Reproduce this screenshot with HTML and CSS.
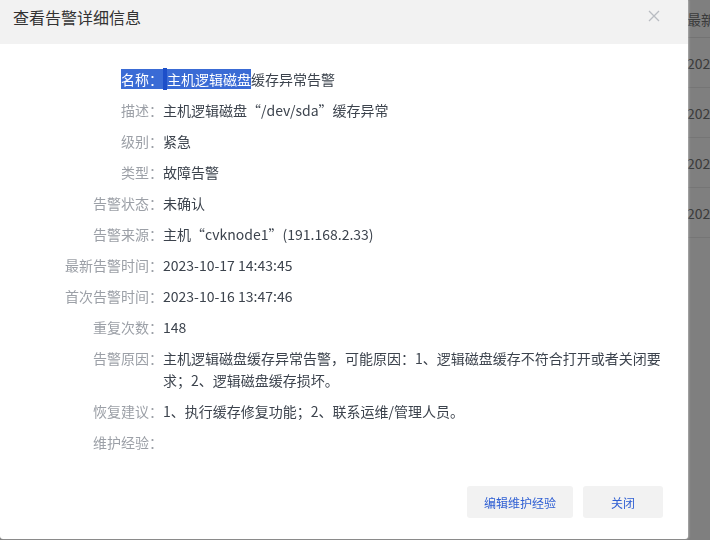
FILE: index.html
```html
<!DOCTYPE html>
<html>

<head>
    <title>告警详细信息</title>
    <link rel="stylesheet" href="styles.css">
</head>

<body>
    <!-- alarm list behind the dialog -->
    <div class="list">
        <div class="list-head"><span class="cell">最新告警时间</span></div>
        <div class="list-row"><span class="cell">2023-10-17 14:43:45</span></div>
        <div class="list-row"><span class="cell">2023-10-17 14:40:12</span></div>
        <div class="list-row"><span class="cell">2023-10-17 14:38:06</span></div>
        <div class="list-row"><span class="cell">2023-10-17 14:30:51</span></div>
    </div>

    <div class="mask"></div>

    <div class="dialog">
        <div class="dialog-head">
            <span class="dialog-title">查看告警详细信息</span>
            <span class="dialog-close">
                <svg width="12" height="12" viewBox="0 0 12 12">
                    <path d="M1 1 L11 11 M11 1 L1 11" stroke="#b9bcc2" stroke-width="1.3" fill="none" />
                </svg>
            </span>
        </div>

        <div class="dialog-body">
            <div class="row">
                <span class="label"><span class="sel">名称：</span></span>
                <span class="value"><span class="sel sel-edge"></span><span class="sel">主机逻辑磁盘</span>缓存异常告警</span>
            </div>
            <div class="row">
                <span class="label">描述：</span>
                <span class="value">主机逻辑磁盘“/dev/sda”缓存异常</span>
            </div>
            <div class="row">
                <span class="label">级别：</span>
                <span class="value">紧急</span>
            </div>
            <div class="row">
                <span class="label">类型：</span>
                <span class="value">故障告警</span>
            </div>
            <div class="row">
                <span class="label">告警状态：</span>
                <span class="value">未确认</span>
            </div>
            <div class="row">
                <span class="label">告警来源：</span>
                <span class="value">主机“cvknode1”(191.168.2.33)</span>
            </div>
            <div class="row">
                <span class="label">最新告警时间：</span>
                <span class="value">2023-10-17 14:43:45</span>
            </div>
            <div class="row">
                <span class="label">首次告警时间：</span>
                <span class="value">2023-10-16 13:47:46</span>
            </div>
            <div class="row">
                <span class="label">重复次数：</span>
                <span class="value">148</span>
            </div>
            <div class="row">
                <span class="label">告警原因：</span>
                <span class="value">主机逻辑磁盘缓存异常告警，可能原因：1、逻辑磁盘缓存不符合打开或者关闭要求；2、逻辑磁盘缓存损坏。</span>
            </div>
            <div class="row">
                <span class="label">恢复建议：</span>
                <span class="value">1、执行缓存修复功能；2、联系运维/管理人员。</span>
            </div>
            <div class="row">
                <span class="label">维护经验：</span>
                <span class="value"></span>
            </div>
        </div>

        <div class="dialog-foot">
            <button class="btn">编辑维护经验</button>
            <button class="btn btn-close">关闭</button>
        </div>
    </div>
</body>

</html>
```

FILE: styles.css
```css
body {
    background: white;
    color: #333;
    font-family: "Noto Sans CJK SC", "Noto Sans", sans-serif;
    font-size: 14px;
    height: 540px;
    margin: 0;
    overflow: hidden;
    padding: 0;
}

.list {
    width: 100%;
}

.list-head {
    align-items: center;
    border-bottom: solid 1px #e6e6e6;
    display: flex;
    height: 37px;
}

.list-row {
    align-items: center;
    border-bottom: solid 1px #eaeaea;
    display: flex;
    height: 49px;
}

.cell {
    color: #767676;
    padding-left: 687px;
    white-space: nowrap;
}

.mask {
    background: rgba(0, 0, 0, .5);
    bottom: 0;
    left: 0;
    position: fixed;
    right: 0;
    top: 0;
}

.dialog {
    background: white;
    border-radius: 0 0 3px 3px;
    box-shadow: 1px 0 2px rgba(255, 255, 255, .35);
    display: flex;
    flex-direction: column;
    height: 539px;
    left: 0;
    position: absolute;
    top: 0;
    width: 688px;
}

.dialog-head {
    background: #f2f2f2;
    display: flex;
    height: 44px;
    justify-content: space-between;
    padding: 0 28px 0 13px;
}

.dialog-title {
    color: #333;
    font-size: 16px;
    line-height: 34px;
}

.dialog-close {
    display: flex;
    margin-top: 10px;
}

.dialog-body {
    flex: 1;
    padding: 24px 25px 0 25px;
}

.row {
    display: flex;
    line-height: 22px;
    margin-bottom: 9px;
    min-height: 22px;
}

.label {
    color: #9ca0a7;
    flex-shrink: 0;
    text-align: right;
    width: 138px;
}

.value {
    color: #3c434d;
    width: 500px;
}

.sel {
    background: #3a6bd5;
    color: white;
}

.sel-edge {
    background: #1d4fc9;
    display: inline-block;
    height: 22px;
    vertical-align: top;
    width: 4px;
}

.dialog-foot {
    display: flex;
    gap: 10px;
    justify-content: flex-end;
    padding: 0 25px 21px 0;
}

.btn {
    background: #f2f2f2;
    border: none;
    border-radius: 3px;
    color: #2f5fd3;
    cursor: pointer;
    font-family: "Noto Sans CJK SC", sans-serif;
    font-size: 12px;
    height: 32px;
    padding: 0 17px;
}

.btn-close {
    width: 80px;
}
```
